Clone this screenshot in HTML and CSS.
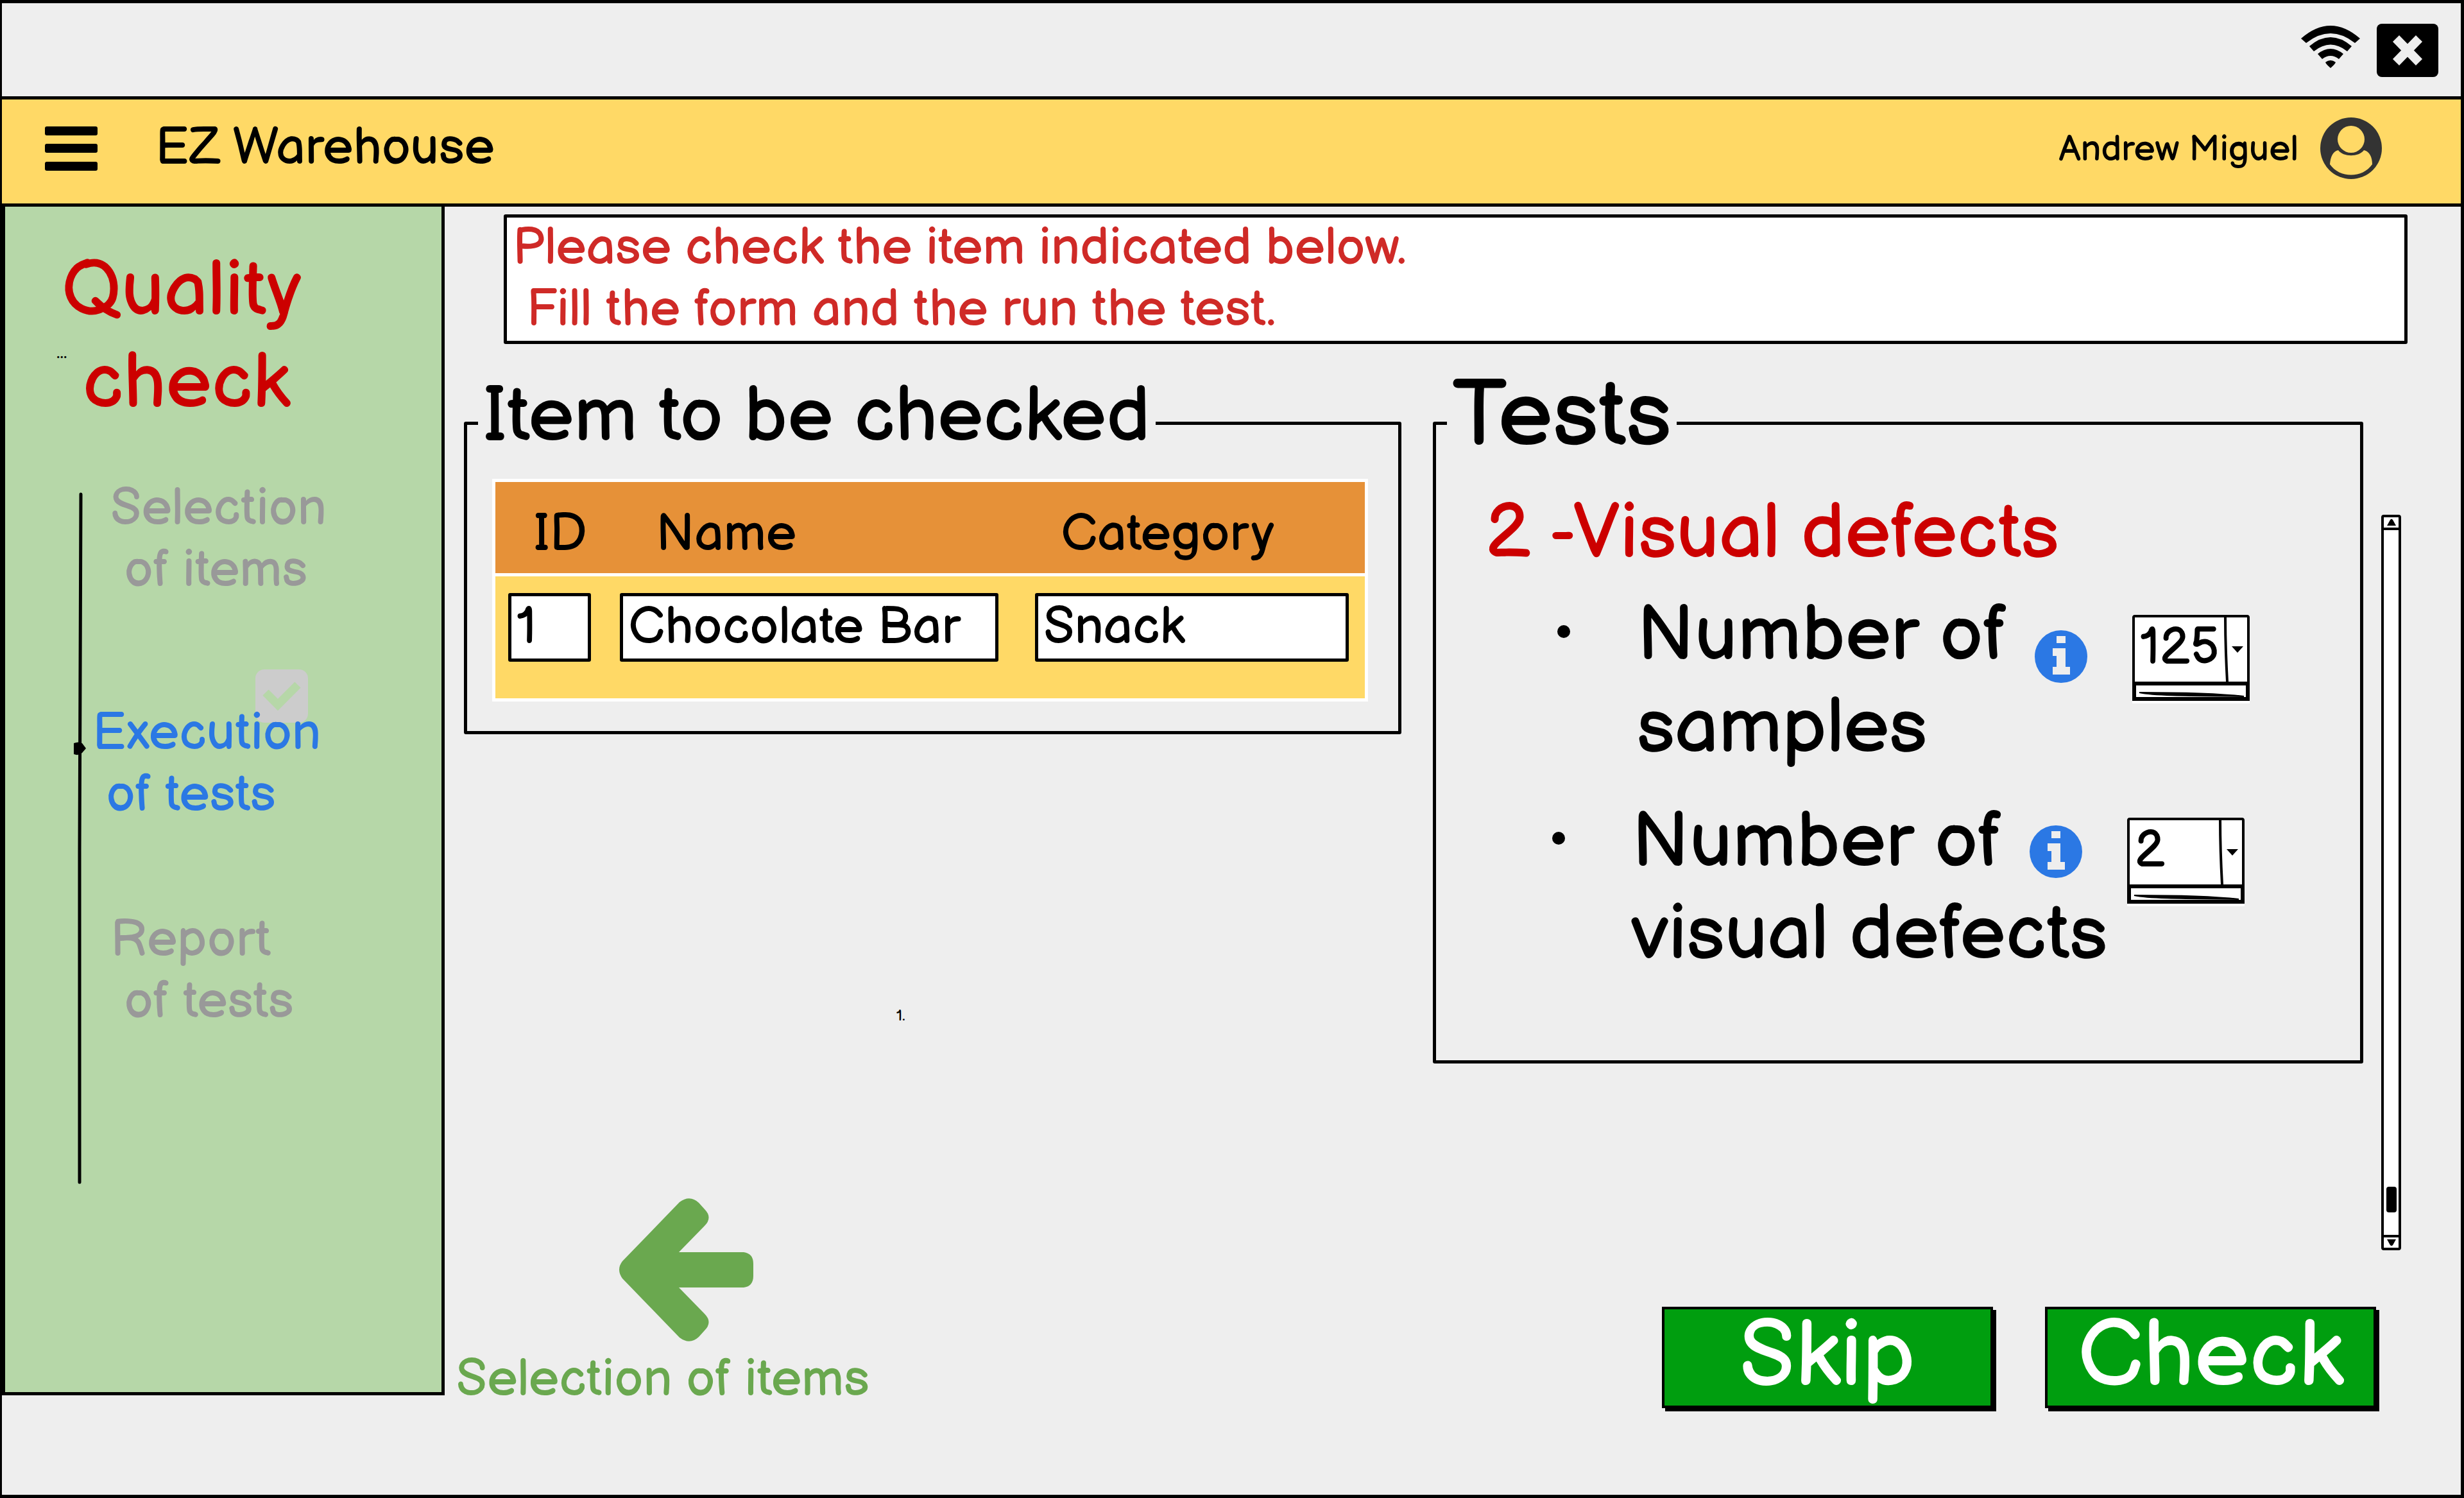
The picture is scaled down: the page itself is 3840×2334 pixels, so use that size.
FILE: index.html
```html
<!DOCTYPE html>
<html lang="en">
<head>
<meta charset="utf-8">
<meta name="viewport" content="width=device-width, initial-scale=1">
<title>EZ Warehouse - Quality check</title>
<link rel="stylesheet" href="styles.css">
</head>
<body>
<div class="window">
  <div class="statusbar">
    <svg class="wifi" viewBox="0 0 92 66" role="img" aria-label="Wi-Fi">
      <path d="M0 20Q46-20 92 20L84 27Q46-3 8 27Z"/>
      <path d="M13 32Q46 4 79 32L72 40Q46 19 20 40Z"/>
      <path d="M26 44Q46 28 66 44L59 52Q46 42 33 52Z"/>
      <path d="M38 57Q46 51 54 57Q53 60 46 66Q39 60 38 57Z"/>
    </svg>
    <button class="icon-button" type="button" aria-label="Close">
      <svg class="close" viewBox="0 0 96 83" aria-hidden="true">
        <rect width="96" height="83" rx="8"/>
        <path class="close-cross" d="M30 23L66 60M66 23L30 60"/>
      </svg>
    </button>
  </div>

  <header class="appbar">
    <button class="icon-button" type="button" aria-label="Menu">
      <svg class="menu" viewBox="0 0 82 69" aria-hidden="true">
        <rect width="82" height="14" rx="3"/>
        <rect y="27" width="82" height="14" rx="3"/>
        <rect y="55" width="82" height="14" rx="3"/>
      </svg>
    </button>
    <span class="brand">EZ Warehouse</span>
    <span class="user">Andrew Miguel</span>
    <svg class="avatar" viewBox="0 0 96 96" role="img" aria-label="Profile">
      <circle cx="48" cy="48" r="48" fill="#333"/>
      <circle cx="48" cy="34" r="21" fill="#ffd966"/>
      <path d="M28 51C36 62 60 62 68 51C77 53 81 62 81 73C66 95 30 95 15 73C16 62 19 53 28 51Z" fill="#ffd966"/>
    </svg>
  </header>

  <div class="workspace">
    <aside class="sidebar">
      <h1 class="sidebar-title">Quality
 check</h1>
      <span class="sidebar-more">...</span>
      <div class="progress">
        <svg class="track" viewBox="0 0 20 1078" aria-hidden="true">
          <path d="M12 3Q10 260 10 560T10 1075" fill="none" stroke="#000" stroke-width="5" stroke-linecap="round"/>
          <path d="M1 391Q8 388 14 391L20 399L14 406Q8 411 1 408Z"/>
        </svg>
        <ol class="steps">
          <li class="step step-done"><svg class="step-check" viewBox="0 0 82 83" role="img" aria-label="Done">
              <rect width="82" height="83" rx="14" fill="#ccc"/>
              <path d="M16 36L35 55L66 24" fill="none" stroke="#b6d7a8" stroke-width="13"/>
            </svg>Selection
 of items</li>
          <li class="step step-current" aria-current="step">Execution
 of tests</li>
          <li class="step step-next">Report
 of tests</li>
        </ol>
      </div>
    </aside>

    <main class="content">
      <p class="message">Please check the item indicated below.
 Fill the form and the run the test.</p>

      <div class="columns">
        <section class="item-column">
          <fieldset class="panel">
            <legend class="panel-title">Item to be checked</legend>
            <table class="items">
              <thead>
                <tr><th class="col-id" id="h-id">ID</th><th class="col-name" id="h-name">Name</th><th class="col-category" id="h-cat">Category</th></tr>
              </thead>
              <tbody>
                <tr>
                  <td><input class="cell-input" type="text" value="1" aria-labelledby="h-id"></td>
                  <td class="cell-name"><input class="cell-input" type="text" value="Chocolate Bar" aria-labelledby="h-name"></td>
                  <td><input class="cell-input" type="text" value="Snack" aria-labelledby="h-cat"></td>
                </tr>
              </tbody>
            </table>
          </fieldset>
          <p class="note">1.</p>
          <a class="back" href="#selection">
            <svg class="back-arrow" viewBox="0 0 209 223" aria-hidden="true">
              <path d="M5 98L94 6Q110-6 124 7L133 17Q146 30 133 43L93 84H194Q209 86 209 102V121Q209 137 194 139H93L133 180Q146 193 133 206L124 216Q110 229 94 217L5 125Q-5 111 5 98Z" fill="#6aa84f"/>
            </svg>
            <span>Selection of items</span>
          </a>
        </section>

        <section class="tests-column">
          <div class="tests-area">
            <fieldset class="panel panel-tests">
              <legend class="panel-title panel-title-large">Tests</legend>
              <h2 class="test-name">2 -Visual defects</h2>
              <ul class="fields">
                <li class="field">
                  <span class="bullet"></span>
                  <label class="field-label" for="samples">Number of
samples</label>
                  <svg class="info" viewBox="0 0 82 82" role="img" aria-label="Info">
                    <circle cx="41" cy="41" r="41" fill="#2b78e4"/>
                    <path d="M34 9h14v11H34ZM28 28h20v29h7v12H28V57h6V40h-6Z" fill="#eee"/>
                  </svg>
                  <span class="combo">
                    <select class="combo-select" id="samples"><option>125</option></select>
                    <svg class="combo-art" viewBox="0 0 183 138" aria-hidden="true">
                      <path d="M145 3Q145 50 148 104" fill="none" stroke="#000" stroke-width="4"/>
                      <path d="M155 49H173L164 59Z"/>
                      <path d="M3 107H180V131H3Z" fill="#fff" stroke="#000" stroke-width="6"/>
                      <path d="M11 121C40 121 120 121 174 127C120 126 40 127 11 121Z" stroke="#000" stroke-width="2"/>
                    </svg>
                  </span>
                </li>
                <li class="field field-wide">
                  <span class="bullet"></span>
                  <label class="field-label" for="defects">Number of
visual defects</label>
                  <svg class="info" viewBox="0 0 82 82" role="img" aria-label="Info">
                    <circle cx="41" cy="41" r="41" fill="#2b78e4"/>
                    <path d="M34 9h14v11H34ZM28 28h20v29h7v12H28V57h6V40h-6Z" fill="#eee"/>
                  </svg>
                  <span class="combo">
                    <select class="combo-select" id="defects"><option>2</option></select>
                    <svg class="combo-art" viewBox="0 0 183 138" aria-hidden="true">
                      <path d="M145 3Q145 50 148 104" fill="none" stroke="#000" stroke-width="4"/>
                      <path d="M155 49H173L164 59Z"/>
                      <path d="M3 107H180V131H3Z" fill="#fff" stroke="#000" stroke-width="6"/>
                      <path d="M11 121C40 121 120 121 174 127C120 126 40 127 11 121Z" stroke="#000" stroke-width="2"/>
                    </svg>
                  </span>
                </li>
              </ul>
            </fieldset>
            <div class="scrollbar" role="scrollbar" aria-orientation="vertical" aria-valuenow="100" aria-label="Tests">
              <svg class="scroll-end scroll-end-top" viewBox="0 0 23 16" aria-hidden="true"><path d="M5 13L10 4Q12 1 14 4L19 13Z"/></svg>
              <span class="scroll-thumb"></span>
              <svg class="scroll-end scroll-end-bottom" viewBox="0 0 23 16" aria-hidden="true"><path d="M5 3H19L14 12Q12 14 10 12Z"/></svg>
            </div>
          </div>
          <div class="actions">
            <button class="action" type="button">Skip</button>
            <button class="action" type="button">Check</button>
          </div>
        </section>
      </div>
    </main>
  </div>
</div>
</body>
</html>
```
FILE: styles.css
```css
* {
  box-sizing: border-box;
}

body {
  margin: 0;
  background: #eee;
  color: #000;
  font-family: "Balsamiq Sans", Inter, "Noto Sans", sans-serif;
  font-size: 80px;
  font-weight: 400;
  line-height: 96px;
}

h1, h2, p, ul, ol, fieldset {
  margin: 0;
  padding: 0;
}

ul, ol {
  list-style: none;
}

button, input, select {
  font: inherit;
  color: inherit;
}

.window {
  min-height: 100vh;
  padding-bottom: 140px;
  border: 5px solid #000;
  border-left-width: 3px;
}

/* Top bars */

.statusbar {
  display: flex;
  justify-content: flex-end;
  align-items: flex-start;
  gap: 26px;
  padding: 32px 35px 30px;
  border-bottom: 5px solid #000;
}

.wifi {
  width: 92px;
  height: 66px;
  margin-top: 3px;
}

.icon-button {
  display: flex;
  padding: 0;
  border: 0;
  background: none;
}

.close {
  width: 96px;
  height: 83px;
}

.close-cross {
  fill: none;
  stroke: #eee;
  stroke-width: 14px;
}

.appbar {
  display: flex;
  align-items: center;
  padding: 28px 123px 38px 67px;
  border-bottom: 5px solid #000;
  background: #ffd966;
}

.menu {
  width: 82px;
  height: 69px;
}

.brand {
  margin-left: 90px;
}

.user {
  margin-left: auto;
  margin-right: 34px;
  padding-top: 6px;
  font-size: 56px;
  line-height: 68px;
}

.avatar {
  width: 96px;
  height: 96px;
}

.workspace {
  display: flex;
  align-items: flex-start;
}

/* Sidebar */

.sidebar {
  position: relative;
  flex: 0 0 18%;
  align-self: stretch;
  padding: 60px 0 0 88px;
  border: 5px solid #000;
  border-top: 0;
  background: #b6d7a8;
}

.sidebar-title {
  color: #c00;
  font-size: 120px;
  font-weight: 400;
  line-height: 144px;
  white-space: pre;
}

.sidebar-more {
  position: absolute;
  left: 80px;
  top: 212px;
  font-size: 28px;
  line-height: 32px;
}

.progress {
  display: flex;
  gap: 12px;
  margin-top: 75px;
  padding-left: 18px;
}

.track {
  width: 20px;
  height: 1078px;
  margin-top: 22px;
}

.steps {
  padding-left: 12px;
}

.step {
  position: relative;
  color: #999;
  white-space: pre;
}

.step-done,
.step-next {
  padding-left: 14px;
}

.step-check {
  position: absolute;
  left: 240px;
  top: 298px;
  width: 82px;
  height: 83px;
}

.step-current {
  margin-top: 158px;
  margin-left: -14px;
  color: #2b78e4;
}

.step-next {
  margin-top: 130px;
}

/* Content */

.content {
  flex: 1;
  min-width: 0;
}

.message {
  margin: 12px 83px 0 92px;
  padding: 0 9px;
  border: 5px solid #000;
  border-radius: 3px;
  background: #fff;
  color: #cf2a27;
  white-space: pre;
}

.columns {
  display: flex;
  gap: 49px;
  margin: 44px 93px 0 18px;
}

.item-column {
  flex: 1472 1 0;
  min-width: 0;
  display: flex;
  flex-direction: column;
}

.tests-column {
  flex: 1508 1 0;
  min-width: 0;
}

.panel {
  min-width: 0;
  padding: 0 17px;
  border: 5px solid #000;
  border-radius: 3px;
}

.item-column .panel {
  margin-left: 12px;
  padding-bottom: 46px;
}

.panel-title {
  padding: 0 8px 18px;
  font-size: 120px;
  line-height: 140px;
}

.panel-title-large {
  font-size: 144px;
}

/* Item table */

.items {
  width: calc(100% - 52px);
  margin: 8px 0 0 22px;
  border-collapse: collapse;
  table-layout: fixed;
}

.items tr {
  border: 5px solid #fff;
}

.items thead tr {
  background: #e69138;
}

.items tbody tr {
  background: #ffd966;
}

.items th {
  padding: 34px 0 12px 60px;
  font-weight: 400;
  text-align: left;
}

.items .col-id {
  width: 177px;
}

.items .col-name {
  width: 647px;
  padding-left: 76px;
}

.items td {
  padding: 26px 25px 57px 20px;
}

.items .cell-name {
  padding-right: 37px;
}

.cell-input {
  display: block;
  width: 100%;
  height: 107px;
  padding: 0 8px;
  border: 5px solid #000;
  border-radius: 3px;
  background: #fff;
}

.note {
  margin: 415px 0 0 686px;
  font-size: 24px;
  line-height: 48px;
}

.back {
  display: flex;
  flex-direction: column;
  align-items: flex-start;
  gap: 12px;
  margin-top: 260px;
  margin-bottom: -24px;
  color: #6aa84f;
  text-decoration: none;
}

.back-arrow {
  width: 209px;
  height: 223px;
  margin-left: 254px;
}

/* Tests */

.tests-area {
  display: flex;
  align-items: flex-start;
  gap: 28px;
}

.panel-tests {
  flex: 1;
  padding-bottom: 123px;
}

.test-name {
  margin: 22px 0 15px 60px;
  color: #c00;
  font-size: 120px;
  font-weight: 400;
  line-height: 144px;
}

.fields {
  display: flex;
  flex-direction: column;
  gap: 34px;
}

.field {
  display: flex;
  align-items: flex-start;
  padding-left: 172px;
}

.field-wide {
  padding-left: 164px;
}

.bullet {
  width: 20px;
  height: 20px;
  margin: 55px 104px 0 0;
  border-radius: 50%;
  background: #000;
}

.field-label {
  width: 620px;
  font-size: 120px;
  line-height: 144px;
  white-space: pre;
}

.info {
  flex: none;
  width: 82px;
  height: 82px;
  margin-top: 63px;
}

.field-wide .info {
  margin-top: 45px;
}

.combo {
  position: relative;
  flex: none;
  width: 183px;
  height: 138px;
  margin: 39px 0 0 70px;
  background: #fff;
}

.field-wide .combo {
  margin-top: 33px;
}

.combo-select {
  display: block;
  width: 100%;
  height: 108px;
  padding: 0 0 12px 8px;
  border: 4px solid #000;
  border-radius: 4px;
  background: #fff;
  appearance: none;
}

.combo-art {
  position: absolute;
  inset: 0;
  width: 100%;
  height: 100%;
  pointer-events: none;
}

.scrollbar {
  display: flex;
  flex-direction: column;
  align-items: center;
  width: 31px;
  height: 1146px;
  margin-top: 222px;
  border: 4px solid #000;
  border-radius: 4px;
  background: #fff;
}

.scroll-end {
  width: 23px;
  height: 20px;
}

.scroll-end-top {
  border-bottom: 4px solid #000;
}

.scroll-end-bottom {
  border-top: 4px solid #000;
}

.scroll-thumb {
  width: 16px;
  height: 40px;
  margin: auto 0 35px;
  border-radius: 4px;
  background: #000;
}

.actions {
  display: flex;
  justify-content: flex-end;
  gap: 81px;
  margin: 88px 39px -24px 0;
}

.action {
  width: 516px;
  height: 158px;
  padding: 0;
  border: 4px solid #000;
  background: #009e0f;
  box-shadow: 5px 5px 0 #000;
  color: #fff;
  font-size: 144px;
  line-height: 140px;
}
```
